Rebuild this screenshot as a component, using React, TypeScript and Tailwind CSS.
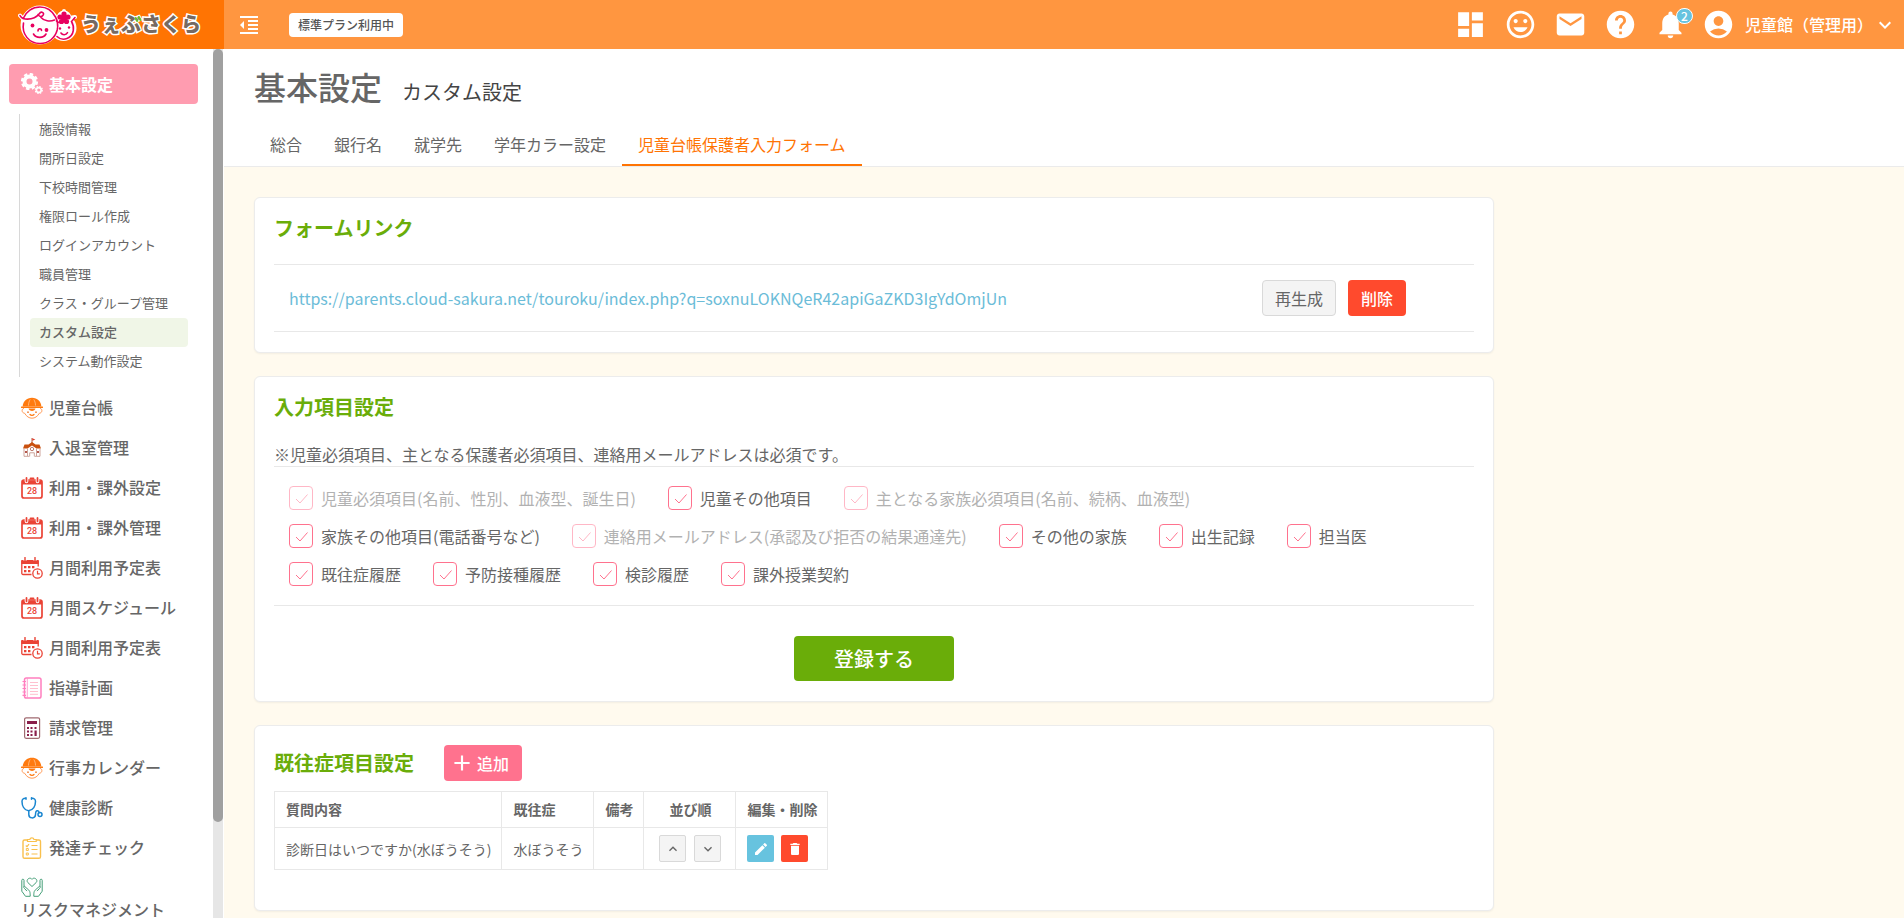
import React, { useState } from "react";
import {
  MdAccountCircle,
  MdAdd,
  MdDashboard,
  MdDelete,
  MdEdit,
  MdEmail,
  MdFormatIndentDecrease,
  MdHelp,
  MdKeyboardArrowDown,
  MdKeyboardArrowUp,
  MdNotifications,
  MdTagFaces,
} from "react-icons/md";

const SUB_MENU = [
  "施設情報",
  "開所日設定",
  "下校時間管理",
  "権限ロール作成",
  "ログインアカウント",
  "職員管理",
  "クラス・グループ管理",
  "カスタム設定",
  "システム動作設定",
];

const TABS = ["総合", "銀行名", "就学先", "学年カラー設定", "児童台帳保護者入力フォーム"];

const FORM_URL = "https://parents.cloud-sakura.net/touroku/index.php?q=soxnuLOKNQeR42apiGaZKD3IgYdOmjUn";

interface FormItem {
  id: string;
  label: string;
  required?: boolean;
}

const FORM_ITEMS: FormItem[] = [
  { id: "child-required", label: "児童必須項目(名前、性別、血液型、誕生日)", required: true },
  { id: "child-other", label: "児童その他項目" },
  { id: "family-required", label: "主となる家族必須項目(名前、続柄、血液型)", required: true },
  { id: "family-other", label: "家族その他項目(電話番号など)" },
  { id: "mail", label: "連絡用メールアドレス(承認及び拒否の結果通達先)", required: true },
  { id: "other-family", label: "その他の家族" },
  { id: "birth", label: "出生記録" },
  { id: "doctor", label: "担当医" },
  { id: "history", label: "既往症履歴" },
  { id: "vaccine", label: "予防接種履歴" },
  { id: "checkup", label: "検診履歴" },
  { id: "extra", label: "課外授業契約" },
];

const iconProps = { viewBox: "0 0 22 22", className: "w-[22px] h-[22px] shrink-0", fill: "none", "aria-hidden": true };

const GearsIcon = () => (
  <svg {...iconProps} stroke="#fff">
    <circle cx="8.5" cy="8.5" r="5" strokeWidth="4" />
    <circle cx="8.5" cy="8.5" r="7.4" strokeWidth="2.4" strokeDasharray="3.4 2.41" />
    <circle cx="17.8" cy="17" r="2.4" strokeWidth="1.6" />
    <circle cx="17.8" cy="17" r="3.5" strokeWidth="1.2" strokeDasharray="1.6 1.15" />
  </svg>
);

const HelmetIcon = () => (
  <svg {...iconProps}>
    <path d="M1.6 9.6C2 4.6 5.600 .8 11 .8s9 3.800 9.400 8.800z" fill="#ff7a0f" />
    <path d="M.6 10.300h20.800" stroke="#ff7a0f" strokeWidth="1.500" strokeLinecap="round" />
    <path d="M7.500 8.500C7.500 6 8.200 4 9.200 2.500M14.500 8.500c0-2.500-.7-4.500-1.700-6" stroke="#ffd0a5" strokeWidth=".7" />
    <path d="M3 11.500c-2.300-.4-2.900 4.500.6 4.700C5.500 19.600 8.200 21.200 11 21.200s5.500-1.600 7.400-5c3.500-.2 2.900-5.100.6-4.700" stroke="#ff9a55" strokeWidth="1" />
    <path d="M7.500 11.500h7c-.3 1.600-2 2.400-3.500 2.400s-3.200-.8-3.500-2.400z" fill="#ff7a0f" />
    <circle cx="7" cy="15.200" r=".9" fill="#f0803a" />
    <circle cx="15" cy="15.200" r=".9" fill="#f0803a" />
    <path d="M9 17.500c1 1.100 3 1.100 4 0" stroke="#ff7a0f" strokeWidth="1.200" strokeLinecap="round" />
  </svg>
);

const SchoolIcon = () => (
  <svg {...iconProps}>
    <path d="M11 1v6" stroke="#a8492a" strokeWidth=".9" />
    <path d="M11.300 1.200l3 1.200-3 1.300z" fill="#e03a2a" />
    <path d="M2 11.500L3.500 7.500H7.500L11 5l3.500 2.500H18.500l1.500 4h-4.500L11 8.500l-4.500 3z" fill="#c9500f" />
    <path d="M3 12v7.300h5.500M19 12v7.300h-5.500M6.500 11.500v7.500M15.500 11.500v7.500M8.700 19.300V15.800h4.600v3.500" stroke="#c79a90" strokeWidth=".9" />
    <circle cx="11" cy="12" r="1.700" stroke="#b86d5d" strokeWidth=".9" />
    <path d="M4 14h2v2H4zM16 14h2v2h-2z" fill="#b5564a" />
  </svg>
);

const CalendarIcon = () => (
  <svg {...iconProps}>
    <rect x="1" y="3" width="20" height="18" rx="2" stroke="#ea4335" strokeWidth="1.700" />
    <path d="M1 3.500h20v4H1z" fill="#ea4335" />
    <path d="M5.500 1v3.500M16.500 1v3.500" stroke="#fff" strokeWidth="3.600" strokeLinecap="round" />
    <path d="M5.500 1v3.300M16.500 1v3.300M9.500 1.500h3" stroke="#ea4335" strokeWidth="1.800" strokeLinecap="round" />
    <text x="11" y="16.800" textAnchor="middle" fontFamily="Roboto, sans-serif" fontSize="9" fontWeight="500" fill="#ea4335">
      28
    </text>
  </svg>
);

const ScheduleIcon = () => (
  <svg {...iconProps}>
    <path d="M10.500 17.500H2A1.200 1.200 0 0 1 .8 16.300V4.500h16.400v5" stroke="#ea4335" strokeWidth="1.300" />
    <path d="M.3 3h17.400v4H.3z" fill="#ea4335" />
    <path d="M4 .8v3M14 .8v3" stroke="#fff" strokeWidth="3" />
    <path d="M4 .5v3.500M14 .5v3.500" stroke="#ea4335" strokeWidth="1.400" strokeLinecap="round" />
    <path
      d="M3 9h2.400v2.200H3zM7 9h2.400v2.200H7zM11 9h2.400v2.200H11zM3 13h2.400v2.200H3zM7 13h2.400v2.200H7z"
      fill="#ea4335"
    />
    <circle cx="16.500" cy="16.500" r="4.700" fill="#fff" stroke="#ea4335" strokeWidth="1.300" />
    <path d="M16.500 13.800v3h2.300" stroke="#ea4335" strokeWidth="1.200" />
  </svg>
);

const NotebookIcon = () => (
  <svg {...iconProps} stroke="#ff7fbf">
    <rect x="3.500" y="1" width="16.500" height="20" rx="1.800" strokeWidth="1.500" />
    <path d="M6.300 1.500v19" strokeWidth=".7" />
    <path d="M1.500 4.500h3.500M1.500 8h3.500M1.500 11.500h3.500M1.500 15h3.500M1.500 18.300h3.500" strokeWidth="1.200" />
    <path d="M9 5.500h8M9 8.500h8M9 11.500h8M9 14.500h8M9 17.300h8" stroke="#ffc0cf" strokeWidth="1" />
  </svg>
);

const CalculatorIcon = () => (
  <svg {...iconProps}>
    <rect x="3.600" y=".8" width="15" height="20.500" rx="1.500" stroke="#a06a70" strokeWidth="1.200" />
    <path d="M6 4h10v3H6z" fill="#8a1f4b" />
    <path
      d="M6 10h2v2H6zM9.500 10h2v2h-2zM13.500 10h2v2h-2zM6 13.500h2v2H6zM9.500 13.500h2v2h-2zM6 17h2v2H6zM9.500 17h2v2h-2zM13.500 13.500h2.200v5.500h-2.200z"
      fill="#8a1f4b"
    />
  </svg>
);

const StethoscopeIcon = () => (
  <svg {...iconProps} stroke="#1a86d0" strokeWidth="1.500" strokeLinecap="round">
    <path d="M4.500 1.300C2.500 1.200 1 2.200 1 4.500c0 4 2 8.500 6.500 9.300 4.800-.5 7-5 7-9.300 0-2.300-1.500-3.300-3.500-3.200" />
    <path d="M5 .8v1.400M10.500 .8v1.400" />
    <path d="M7.800 14v3.500c0 4.300 6.400 4.600 6.700.3.100-3 .5-4.300 2.200-4 1.400.3 1.300 1.500 1.500 2" />
    <circle cx="19" cy="17.600" r="2" />
  </svg>
);

const ClipboardIcon = () => (
  <svg {...iconProps} stroke="#f9c04d">
    <rect x="2" y="3" width="17.500" height="18.300" rx="1.600" strokeWidth="1.400" />
    <path d="M6.500 4.500v-2h2.300C9.300.3 12.500.3 13 2.500h2.200v2z" fill="#fff" strokeWidth="1.200" />
    <path d="M4.800 8.500l1.200 1.200 2-2.500" strokeWidth="1.200" />
    <path d="M10.500 8.500h6M10.500 12.500h6M10.500 17h6" strokeWidth="1.200" />
    <path d="M5.300 11.500h2v2h-2zM5.300 16h2v2h-2z" strokeWidth="1" />
  </svg>
);

const HandsHeartIcon = () => (
  <svg {...iconProps} stroke="#459f78" strokeWidth="1" strokeLinejoin="round">
    <path d="M11 10.500L6.800 6.500C4.500 4 8.700.3 11 3.300c2.300-3 6.500.7 4.200 3.200z" />
    <path d="M4.500 20.300L.8 15.200V4.300C.8 2.800 3 2.800 3 4.300v5.500l4.800 4.300c1.100 1.200 1.400 2 1.400 6.200H4.500zM3 9.800c-.6 1.200-.3 1.900.5 2.700l2.500 2.600" />
    <path d="M17.500 20.300l3.700-5.100V4.300c0-1.500-2.200-1.500-2.200 0v5.500l-4.800 4.300c-1.100 1.200-1.400 2-1.400 6.200h4.700zM19 9.800c.6 1.200.3 1.900-.5 2.700L16 15.100" />
  </svg>
);

const MAIN_MENU = [
  { label: "児童台帳", icon: HelmetIcon },
  { label: "入退室管理", icon: SchoolIcon },
  { label: "利用・課外設定", icon: CalendarIcon },
  { label: "利用・課外管理", icon: CalendarIcon },
  { label: "月間利用予定表", icon: ScheduleIcon },
  { label: "月間スケジュール", icon: CalendarIcon },
  { label: "月間利用予定表", icon: ScheduleIcon },
  { label: "指導計画", icon: NotebookIcon },
  { label: "請求管理", icon: CalculatorIcon },
  { label: "行事カレンダー", icon: HelmetIcon },
  { label: "健康診断", icon: StethoscopeIcon },
  { label: "発達チェック", icon: ClipboardIcon },
];

const Mascot = () => (
  <svg viewBox="0 0 60 44" className="w-[60px] h-[44px] shrink-0" fill="none" aria-hidden>
    {/* white backing */}
    <g fill="#fff" stroke="#fff" strokeWidth="4" strokeLinejoin="round">
      <circle cx="22" cy="22" r="17.500" />
      <circle cx="45.500" cy="25" r="11" />
      <path d="M6 17L2 12.500M51 15l6-1M46 8v8" strokeLinecap="round" />
      <circle cx="46" cy="15" r="5.500" />
    </g>
    <g stroke="#e8005f" strokeWidth="1.600" strokeLinecap="round">
      <path d="M37.500 14C34 7.500 28.500 4 22 4 14.500 4 8 8.500 5.200 15.500M5.500 20C3.500 31 11 40.500 22 40.500c8.500 0 15-5.500 17.200-13.500 1-4.500.5-9-1.700-13" />
      <path d="M2 12.500c1 2.200 2.500 3.300 5 3.500 6.500.7 11-1 14.500-5.500 1.500-2.500 5.500-1 3.500 1.800-1.500 2-4 1.300-5-.8M23 14.500c3 3.500 9 4.500 13.500 2.500" />
      <path d="M15.500 31c2.500 4.500 10 4.500 12.500 0" />
      <path d="M20 28c0-3 3.500-3 3.500-.5" />
      <path d="M39 33.500c6 5.500 15 2 16.300-6 .5-3.500-.3-6.500-1.800-9l3.500-4M38.500 18c1.500 1.500 3.500 2 6 1.700" />
      <path d="M43 30c1.500 2.500 5 2.300 6.500-.3" />
    </g>
    <g fill="#e8005f">
      <circle cx="14.500" cy="22.500" r="1.900" />
      <circle cx="28.500" cy="27" r="1.900" />
      <circle cx="42" cy="25.500" r="1.200" />
      <circle cx="51" cy="24.500" r="1.200" />
      <circle cx="46" cy="11.200" r="2.600" />
      <circle cx="50" cy="14" r="2.600" />
      <circle cx="48.500" cy="18.500" r="2.600" />
      <circle cx="43.500" cy="18.500" r="2.600" />
      <circle cx="42" cy="14" r="2.600" />
      <circle cx="46" cy="15" r="3" />
    </g>
  </svg>
);

function Header() {
  return (
    <header className="flex h-[49px] shrink-0 bg-[#ff9640] text-white">
      <a href="#" className="flex w-56 shrink-0 items-center gap-[3px] bg-[#ff7403] pl-[18px]">
        <Mascot />
        <span className="relative pb-0.5 text-xl font-black whitespace-nowrap text-[#766a62] [-webkit-text-stroke:3px_#fff] [paint-order:stroke]">
          うぇぶさくら
          {/* leaf accent */}
          <svg viewBox="0 0 8 8" className="absolute top-1.5 left-[53px] h-2 w-2" aria-hidden>
            <path d="M1.500 2l1.700 3M4.800 1l1.700 3" stroke="#6cc02a" strokeWidth="2" strokeLinecap="round" />
          </svg>
        </span>
      </a>
      <div className="flex flex-1 items-center pl-[13px]">
        <button type="button" aria-label="メニューを閉じる">
          <MdFormatIndentDecrease className="h-6 w-6" />
        </button>
        <span className="ml-7 flex h-6 items-center rounded-sm bg-white px-[9px] text-xs font-medium text-[#555]">
          標準プラン利用中
        </span>
      </div>
      <div className="flex items-center gap-[17px]">
        <button type="button" aria-label="ダッシュボード">
          <MdDashboard className="h-[33px] w-[33px]" />
        </button>
        <button type="button" aria-label="サポート">
          <MdTagFaces className="h-[33px] w-[33px]" />
        </button>
        <button type="button" aria-label="メール">
          <MdEmail className="h-[33px] w-[33px]" />
        </button>
        <button type="button" aria-label="ヘルプ">
          <MdHelp className="h-[33px] w-[33px]" />
        </button>
        <button type="button" aria-label="お知らせ" className="relative">
          <MdNotifications className="h-[33px] w-[33px]" />
          <span className="absolute top-0 -right-1.5 flex h-4 w-[17px] items-center justify-center rounded-full border border-white bg-[#67c3df] text-xs leading-none font-medium">
            2
          </span>
        </button>
      </div>
      <button type="button" className="mr-[7px] ml-[15px] flex items-center">
        <MdAccountCircle className="h-[33px] w-[33px]" />
        <span className="ml-2.5 pb-0.5 text-base font-medium">児童館（管理用）</span>
        <MdKeyboardArrowDown className="h-6 w-6" />
      </button>
    </header>
  );
}

function Sidebar() {
  return (
    <aside className="flex w-56 shrink-0 bg-white">
      <nav className="min-w-0 flex-1 overflow-hidden pt-[15px] pr-[15px] pl-[9px]">
        <a href="#" className="flex h-10 items-center gap-1.5 rounded-sm bg-[#ff9cb0] pl-3 font-bold text-white">
          <GearsIcon />
          基本設定
        </a>
        <ul className="mt-2.5 ml-2.5 border-l border-[#d8d8d8] py-px pr-2.5 pl-2.5">
          {SUB_MENU.map((label) => (
            <li key={label}>
              <a
                href="#"
                className={`flex h-[29px] items-center rounded-sm pb-0.5 pl-[9px] text-[13px] whitespace-nowrap ${
                  label === "カスタム設定" ? "bg-[#f0f6e7] font-medium" : ""
                }`}
              >
                {label}
              </a>
            </li>
          ))}
        </ul>
        <ul className="mt-[11px] pl-3">
          {MAIN_MENU.map(({ label, icon: Icon }, i) => (
            <li key={i}>
              <a href="#" className="flex h-10 items-center gap-1.5 font-medium whitespace-nowrap">
                <Icon />
                <span className="pb-0.5">{label}</span>
              </a>
            </li>
          ))}
          <li>
            <a href="#" className="block pt-2 leading-[22px] font-medium">
              <HandsHeartIcon />
              リスクマネジメント
            </a>
          </li>
        </ul>
      </nav>
      <div className="mr-px w-2.5 shrink-0 bg-[#e6e6e6]">
        <div className="h-[89%] rounded-full bg-[#a0a0a0]" />
      </div>
    </aside>
  );
}

function Card({ children, className = "" }: { children: React.ReactNode; className?: string }) {
  return (
    <section className={`rounded-md border border-[#ececec] bg-white px-[19px] shadow-xs ${className}`}>
      {children}
    </section>
  );
}

function CheckItem({ item, checked, onChange }: { item: FormItem; checked: boolean; onChange: () => void }) {
  return (
    <label className={`flex items-center gap-2 ${item.required ? "opacity-50" : ""}`}>
      <span className="grid h-6 w-6">
        <input
          type="checkbox"
          checked={checked}
          disabled={item.required}
          onChange={onChange}
          className="peer col-start-1 row-start-1 h-6 w-6 appearance-none rounded-sm border border-[#ff728e] bg-white"
        />
        <svg
          viewBox="0 0 24 24"
          className="pointer-events-none invisible col-start-1 row-start-1 h-6 w-6 peer-checked:visible"
          fill="none"
          stroke="#ff728e"
          aria-hidden
        >
          <path d="M7 13l4 4 7.500-8.500" />
        </svg>
      </span>
      {item.label}
    </label>
  );
}

export default function App() {
  const [activeTab, setActiveTab] = useState(TABS[4]);
  const [checked, setChecked] = useState<string[]>(FORM_ITEMS.map((item) => item.id));

  const toggle = (id: string) => {
    setChecked(checked.includes(id) ? checked.filter((c) => c !== id) : [...checked, id]);
  };

  return (
    <div className="flex h-screen flex-col font-['Noto_Sans_CJK_JP',sans-serif] text-base text-[#666]">
      <Header />
      <div className="flex min-h-0 flex-1">
        <Sidebar />
        <main className="min-w-0 flex-1 overflow-auto bg-[#fffaee]">
          <div className="border-b border-[#ebebeb] bg-white px-[30px] pt-[13px]">
            <div className="flex items-baseline gap-5">
              <h1 className="text-[32px] leading-[48px] font-medium">基本設定</h1>
              <p className="text-xl text-[#444]">カスタム設定</p>
            </div>
            <div role="tablist" className="mt-[15px] flex">
              {TABS.map((tab) => (
                <button
                  key={tab}
                  type="button"
                  role="tab"
                  aria-selected={tab === activeTab}
                  onClick={() => setActiveTab(tab)}
                  className={`h-[41px] border-b-2 px-4 pb-0.5 ${
                    tab === activeTab ? "border-[#ff7403] text-[#ff7403]" : "border-transparent"
                  }`}
                >
                  {tab}
                </button>
              ))}
            </div>
          </div>

          <div className="flex max-w-[1300px] flex-col gap-[23px] px-[30px] pt-[30px] pb-1">
            {/* Form link */}
            <Card className="pt-4 pb-5">
              <h2 className="mb-[22px] text-xl font-bold text-[#6aad09]">フォームリンク</h2>
              <div className="flex items-center gap-3 border-y border-[#e8e8e8] py-[15px] pr-[68px] pl-[15px]">
                <a href="#" className="flex-1 text-[#6bbcd8]">
                  {FORM_URL}
                </a>
                <button type="button" className="h-9 rounded-sm border border-[#d9d9d9] bg-[#f4f4f4] px-3">
                  再生成
                </button>
                <button type="button" className="h-9 rounded-sm bg-[#ff4a2d] px-[13px] font-medium text-white">
                  削除
                </button>
              </div>
            </Card>

            {/* Input items */}
            <Card className="pt-4 pb-5">
              <h2 className="mb-[21px] text-xl font-bold text-[#6aad09]">入力項目設定</h2>
              <p>※児童必須項目、主となる保護者必須項目、連絡用メールアドレスは必須です。</p>
              <div className="flex flex-wrap gap-x-8 gap-y-[14px] border-y border-[#e8e8e8] px-[15px] py-[19px]">
                {FORM_ITEMS.map((item) => (
                  <CheckItem
                    key={item.id}
                    item={item}
                    checked={checked.includes(item.id)}
                    onChange={() => toggle(item.id)}
                  />
                ))}
              </div>
              <button
                type="button"
                className="mx-auto mt-[30px] block h-[45px] w-40 rounded-sm bg-[#6aad09] text-xl font-medium text-white"
              >
                登録する
              </button>
            </Card>

            {/* Medical history items */}
            <Card className="pt-[19px] pb-10">
              <div className="flex items-center gap-[30px]">
                <h2 className="text-xl font-bold text-[#6aad09]">既往症項目設定</h2>
                <button
                  type="button"
                  className="flex h-9 items-center gap-0.5 rounded-sm bg-[#ff728e] pr-[13px] pl-[5px] font-medium text-white"
                >
                  <MdAdd className="h-[26px] w-[26px]" />
                  追加
                </button>
              </div>
              <table className="mt-2.5 border-collapse text-sm [&_td]:border [&_td]:border-[#e8e8e8] [&_td]:pr-2.5 [&_td]:pl-[11px] [&_th]:border [&_th]:border-[#e8e8e8] [&_th]:pr-2.5 [&_th]:pb-0.5 [&_th]:pl-[11px]">
                <thead>
                  <tr className="h-9 text-left">
                    <th>質問内容</th>
                    <th>既往症</th>
                    <th>備考</th>
                    <th className="text-center">並び順</th>
                    <th>編集・削除</th>
                  </tr>
                </thead>
                <tbody>
                  <tr className="h-[42px]">
                    <td>診断日はいつですか(水ぼうそう)</td>
                    <td>水ぼうそう</td>
                    <td />
                    <td>
                      <div className="flex gap-2 px-1">
                        <button
                          type="button"
                          aria-label="上へ"
                          className="flex h-[27px] w-[27px] items-center justify-center rounded-xs border border-[#d9d9d9] bg-[#f4f4f4]"
                        >
                          <MdKeyboardArrowUp className="h-4 w-4" />
                        </button>
                        <button
                          type="button"
                          aria-label="下へ"
                          className="flex h-[27px] w-[27px] items-center justify-center rounded-xs border border-[#d9d9d9] bg-[#f4f4f4]"
                        >
                          <MdKeyboardArrowDown className="h-4 w-4" />
                        </button>
                      </div>
                    </td>
                    <td>
                      <div className="flex gap-[7px] text-white">
                        <button
                          type="button"
                          aria-label="編集"
                          className="flex h-[27px] w-[27px] items-center justify-center rounded-xs bg-[#67c3df]"
                        >
                          <MdEdit className="h-4 w-4" />
                        </button>
                        <button
                          type="button"
                          aria-label="削除"
                          className="flex h-[27px] w-[27px] items-center justify-center rounded-xs bg-[#ff4a2d]"
                        >
                          <MdDelete className="h-4 w-4" />
                        </button>
                      </div>
                    </td>
                  </tr>
                </tbody>
              </table>
            </Card>
          </div>
        </main>
      </div>
    </div>
  );
}
